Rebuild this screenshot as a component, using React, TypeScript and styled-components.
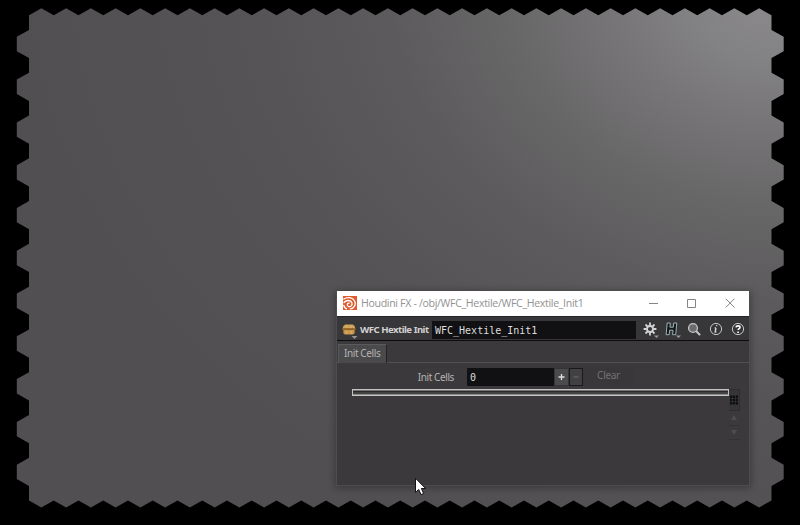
import React from "react";
import styled, { createGlobalStyle } from "styled-components";

const GlobalStyle = createGlobalStyle`
  body { margin: 0; background: #000; overflow: hidden; }
  * { box-sizing: border-box; }
`;

const Viewport = styled.main`
  position: relative;
  width: 800px;
  height: 525px;
  background: #000;
  overflow: hidden;
`;

const HexSheet = styled.svg`
  display: block;
`;

const FloatingWindow = styled.section`
  position: absolute;
  left: 336px;
  top: 291px;
  width: 414px;
  height: 195px;
  display: flex;
  flex-direction: column;
  background: #3b393b;
  border: solid #4d4c4e;
  border-width: 0 1px 1px 1px;
  box-shadow: 0 1px 7px 1px rgba(0, 0, 0, 0.3);
  font-family: "Noto Sans", sans-serif;
`;

const TitleBar = styled.header`
  display: flex;
  align-items: center;
  height: 25px;
  flex: none;
  padding: 0 0 1px 6px;
  background: #fff;
`;

const Title = styled.span`
  flex: 1;
  padding-left: 4px;
  color: #929292;
  font: 10.6px/24px "Open Sans", sans-serif;
  letter-spacing: -0.33px;
  white-space: nowrap;
`;

const WindowButton = styled.span`
  display: flex;
  justify-content: center;
  width: 38.5px;
`;

const Toolbar = styled.div`
  display: flex;
  align-items: center;
  flex: none;
  height: 25px;
  padding: 2px 0 0 5px;
  background: #373638;
  border-top: 1px solid #252426;
  border-bottom: 1px solid #0d0c0d;
`;

const NodeType = styled.span`
  width: 74px;
  padding-left: 2px;
  color: #d2d0d2;
  font: 700 9.6px/18px "Noto Sans", sans-serif;
  letter-spacing: -0.55px;
  word-spacing: 0.3px;
  white-space: nowrap;
`;

const NameField = styled.span`
  width: 204px;
  height: 18px;
  padding-left: 3px;
  color: #dedede;
  background: #111012;
  font: 10px/19px "DejaVu Sans Mono", monospace;
`;

const ToolIcons = styled.div`
  display: flex;
  align-items: center;
  gap: 4px;
  padding: 0 0 1px 5px;
`;

const ToolIcon = styled.svg`
  display: block;
  flex: none;
  width: 18px;
  height: 18px;
`;

const TabStrip = styled.nav`
  display: flex;
  flex: none;
  height: 22px;
  padding: 3px 0 0 1px;
  border-bottom: 1px solid #515052;
`;

const Tab = styled.span`
  width: 49px;
  height: 19px;
  padding-left: 5px;
  color: #b5b3b5;
  background: #4a494b;
  border: solid #5a595b;
  border-width: 1px 1px 0;
  border-right-color: #232224;
  font-size: 10px;
  line-height: 17px;
  letter-spacing: -0.4px;
  white-space: nowrap;
`;

const Body = styled.div`
  display: flex;
  flex-direction: column;
  padding: 4px 8px 0 15px;
`;

const ParameterRow = styled.div`
  display: flex;
  align-items: center;
  height: 20px;
`;

const Label = styled.label`
  width: 115px;
  padding-right: 13px;
  color: #b5b3b5;
  font-size: 10px;
  line-height: 18px;
  letter-spacing: -0.4px;
  text-align: right;
  white-space: nowrap;
`;

const CountField = styled.span`
  width: 87px;
  height: 18px;
  padding-left: 3px;
  color: #dedede;
  background: #111012;
  font: 10px/19px "DejaVu Sans Mono", monospace;
`;

const StepButton = styled.span<{ $disabled?: boolean }>`
  display: grid;
  place-items: center;
  width: ${(p) => (p.$disabled ? 14 : 15)}px;
  height: 18px;
  color: ${(p) => (p.$disabled ? "#707071" : "#e0dfe0")};
  background: ${(p) => (p.$disabled ? "#414042" : "#4b4a4c")};
  border: 1px solid ${(p) => (p.$disabled ? "#19181a" : "#343335")};
`;

const ClearButton = styled.span`
  width: 51px;
  height: 18px;
  color: #737273;
  background: #393739;
  font-size: 10px;
  line-height: 15px;
  letter-spacing: -0.3px;
  text-align: center;
`;

const ListArea = styled.div`
  display: flex;
  align-items: flex-start;
  padding-top: 2px;
`;

const CellTrack = styled.div`
  width: 377px;
  height: 7px;
  border: 1px solid #c3c3c2;
  background: linear-gradient(#747474 0 1px, #2b2a2b 1px 2px, #434243 2px 4px, #8c8c8c 4px);
`;

const SideControls = styled.svg`
  display: block;
`;

const Pointer = styled.svg`
  position: absolute;
  left: 414px;
  top: 477px;
`;

const sheetOutline = (): string => {
  const pitch = 24.75;
  const left = 29;
  const right = left + pitch * 30;
  const rowStep = 42.79;
  const points: string[] = [`${left},15.3`];
  for (let i = 0; i < 30; i++) {
    points.push(`${left + pitch * (i + 0.5)},8.3`, `${left + pitch * (i + 1)},15.3`);
  }
  for (let i = 0; i < 11; i++) {
    const y = 44 + i * rowStep;
    points.push(`${right},${y - 14.1}`, `${right + 12.2},${y - 7.2}`, `${right + 12.2},${y + 7.2}`, `${right},${y + 14.1}`);
  }
  points.push(`${right},500.5`);
  for (let i = 29; i >= 0; i--) {
    points.push(`${left + pitch * (i + 0.5)},507.5`, `${left + pitch * i},500.5`);
  }
  for (let i = 10; i >= 0; i--) {
    const y = 44 + i * rowStep;
    points.push(`${left},${y + 14.1}`, `${left - 12.2},${y + 7.2}`, `${left - 12.2},${y - 7.2}`, `${left},${y - 14.1}`);
  }
  return points.join(" ");
};

const HexBackground = () => (
  <HexSheet width="800" height="525" viewBox="0 0 800 525">
    <defs>
      <radialGradient id="glow" gradientUnits="userSpaceOnUse" cx="0" cy="0" r="720" gradientTransform="translate(765 0) rotate(8) scale(1.06 .84)">
        <stop offset="0" stopColor="#8b898b" />
        <stop offset="0.1" stopColor="#828183" />
        <stop offset="0.2" stopColor="#777577" />
        <stop offset="0.34" stopColor="#686768" />
        <stop offset="0.5" stopColor="#5c5a5c" />
        <stop offset="0.7" stopColor="#555355" />
        <stop offset="1" stopColor="#514f51" />
      </radialGradient>
    </defs>
    <polygon points={sheetOutline()} fill="url(#glow)" />
  </HexSheet>
);

const HoudiniLogo = () => (
  <svg width="14" height="14" viewBox="0 0 14 14">
    <path d="M0 0h14v14H0z" fill="#df5b2d" />
    <g fill="none" stroke="#fff" strokeLinecap="round">
      <path d="M.8 3C4.3.6 9.7 1.2 11.6 5c1.7 3.5-.5 7.4-4.3 7.8" strokeWidth="1.3" />
      <path d="M1 6.5C3.4 3.6 7.8 4 8.9 6.7c1 2.6-1.7 4.7-3.7 3.5-1.7-1.1-.8-3.3.9-3" strokeWidth="1.3" />
      <path d="M.9 9.6c.4 1.7 1.3 2.7 2.5 3.2" strokeWidth="1.5" />
    </g>
  </svg>
);

const AssetIcon = () => (
  <svg width="16" height="18" viewBox="0 0 16 18">
    <path d="M3.2 3.6h7.6q2.4 1.2 2.4 3.4H.8q0-2.2 2.4-3.4z" fill="#cfa35a" />
    <path d="M.5 7h13v2H.5z" fill="#a9752f" />
    <path d="M1.5 8.2h11" stroke="#76532a" strokeWidth=".8" />
    <path d="M1.4 9h11.2v2.8q0 1.8-2 1.8H3.4q-2 0-2-1.8z" fill="#cb9749" />
    <path d="M4.7 4.2v2.6M9.2 4.2v2.6M4.7 10v3M9.2 10v3" stroke="#dfbd7c" strokeWidth=".7" />
    <path d="M9.5 15h6l-3 3z" fill="#959495" />
  </svg>
);

const App = () => (
  <>
    <GlobalStyle />
    <Viewport>
      <HexBackground />
      <FloatingWindow>
        <TitleBar>
          <HoudiniLogo />
          <Title>Houdini FX - /obj/WFC_Hextile/WFC_Hextile_Init1</Title>
          <WindowButton>
            <svg width="10" height="10"><path d="M1 5.5h9" stroke="#858585" /></svg>
          </WindowButton>
          <WindowButton>
            <svg width="10" height="10"><path d="M1.5 1.5h8v8h-8z" fill="none" stroke="#858585" /></svg>
          </WindowButton>
          <WindowButton>
            <svg width="10" height="10"><path d="m.7.7 8.8 8.8m0-8.8L.7 9.5" stroke="#858585" /></svg>
          </WindowButton>
        </TitleBar>
        <Toolbar>
          <AssetIcon />
          <NodeType>WFC Hextile Init</NodeType>
          <NameField>WFC_Hextile_Init1</NameField>
          <ToolIcons>
            <ToolIcon viewBox="0 0 18 18">
              <g stroke="#d5d4d5" strokeWidth="1.8" fill="none">
                <circle cx="9" cy="9" r="3" />
                <path d="M9 2.6v3M9 12.4v3M2.6 9h3M12.4 9h3M4.5 4.5l2.1 2.1M11.4 11.4l2.1 2.1M4.5 13.5l2.1-2.1M11.4 6.6l2.1-2.1" />
              </g>
              <path d="M13 15.5h5L15.5 18z" fill="#9b9a9b" />
            </ToolIcon>
            <ToolIcon viewBox="0 0 18 18">
              <path d="M4.2 3h3.1l-.4 4.2h3.4l.4-4.2h3.1l-1.1 11.7H9.6l.4-4.5H6.6l-.4 4.5H3.1z" fill="#171719" stroke="#a6c0c5" strokeWidth=".9" />
              <path d="M13 15.5h5L15.5 18z" fill="#9b9a9b" />
            </ToolIcon>
            <ToolIcon viewBox="0 0 18 18">
              <circle cx="8" cy="8" r="4.4" fill="#6b6a6c" stroke="#c7c6c7" strokeWidth="1.3" />
              <path d="m11.3 11.3 3.8 3.8" stroke="#c9c8c9" strokeWidth="2" />
            </ToolIcon>
            <ToolIcon viewBox="0 0 18 18">
              <circle cx="9" cy="9" r="5.6" fill="#343335" stroke="#c9c8c9" />
              <path d="m9 8-.8 4M9.7 5.1l-.2 1.1M7.7 8H9M7.5 12h1.8" stroke="#d7d6d7" strokeWidth="1.4" />
            </ToolIcon>
            <ToolIcon viewBox="0 0 18 18">
              <circle cx="9" cy="9" r="5.6" fill="#343335" stroke="#c9c8c9" />
              <path d="M7 7.3C7.2 5.4 11 5.3 11 7.4c0 1.3-1.9 1.2-1.9 2.7M9.1 11.5v1.4" fill="none" stroke="#fff" strokeWidth="1.6" />
            </ToolIcon>
          </ToolIcons>
        </Toolbar>
        <TabStrip>
          <Tab>Init Cells</Tab>
        </TabStrip>
        <Body>
          <ParameterRow>
            <Label>Init Cells</Label>
            <CountField>0</CountField>
            <StepButton>
              <svg width="9" height="8"><path d="M4.5 1v6M1.5 4h6" stroke="currentColor" strokeWidth="1.3" /></svg>
            </StepButton>
            <StepButton $disabled>
              <svg width="8" height="8"><path d="M1.5 4h5" stroke="currentColor" /></svg>
            </StepButton>
            <ClearButton>Clear</ClearButton>
          </ParameterRow>
          <ListArea>
            <CellTrack />
            <SideControls width="11" height="52" viewBox="1 0 11 52">
              <path d="M.5.5h11v21H.5z" fill="#353436" stroke="#2e2d2f" />
              <path d="M2 6.5h8v9H2z" fill="#0e0e0f" />
              <path d="M1.5 9.5h9M1.5 12.5h9M4.5 6v10M7.5 6v10" stroke="#414042" strokeWidth=".5" />
              <path d="M0 36.5h12M0 50.5h12" stroke="#333234" />
              <path d="m6 26 3 5H3zM3 41h6l-3 5z" fill="#4d4c4e" />
            </SideControls>
          </ListArea>
        </Body>
      </FloatingWindow>
      <Pointer width="16" height="20" viewBox="0 0 16 20">
        <path d="M1.5 1.2v14.2l3.2-3 2.3 5.2 2.6-1.1-2.2-5h4.2z" fill="#fff" stroke="#151415" />
      </Pointer>
    </Viewport>
  </>
);

export default App;
